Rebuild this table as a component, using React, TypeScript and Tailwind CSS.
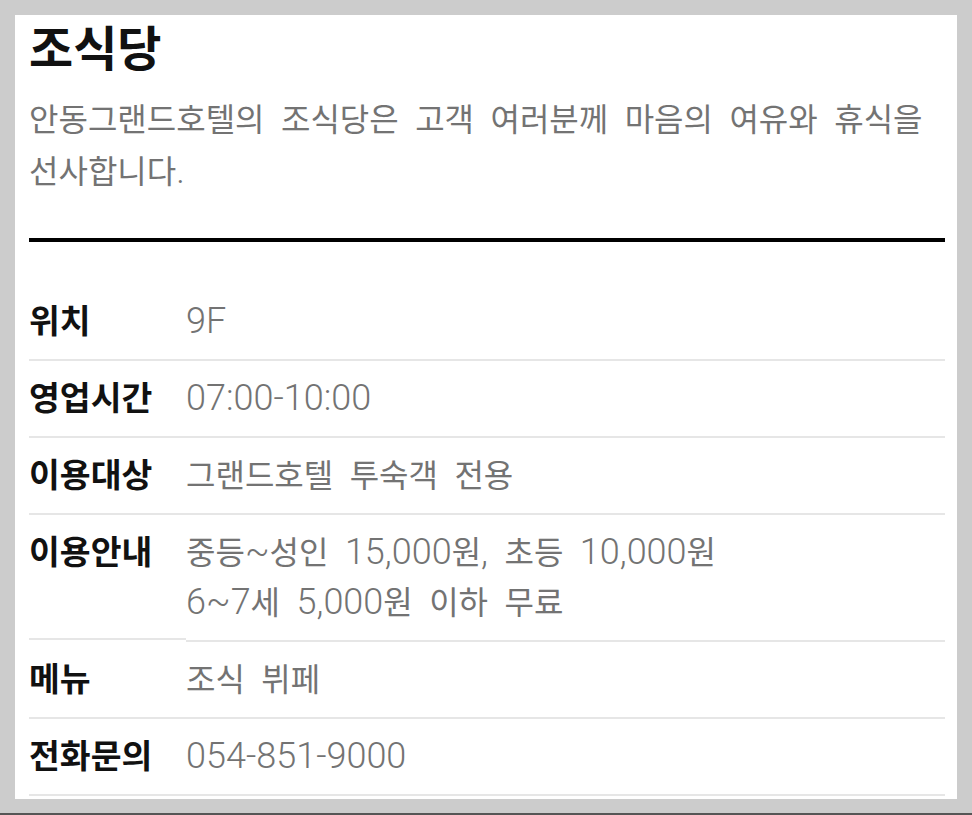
import React from "react";

const FONT = { fontFamily: 'Roboto, "Noto Sans CJK KR", sans-serif' };

function Mixed({ text }: { text: string }) {
  const parts = text.split(/([0-9A-Za-z:,.~\-]+)/);
  return (
    <>
      {parts.map((p, i) =>
        i % 2 === 1 ? (
          <span key={i} className="text-[36px] leading-[0] font-light tracking-normal">
            {p}
          </span>
        ) : (
          <span key={i}>{p}</span>
        )
      )}
    </>
  );
}

type Row = { label: string; lines: string[] };

const rows: Row[] = [
  { label: "위치", lines: ["9F"] },
  { label: "영업시간", lines: ["07:00-10:00"] },
  { label: "이용대상", lines: ["그랜드호텔 투숙객 전용"] },
  { label: "이용안내", lines: ["중등~성인 15,000원, 초등 10,000원", "6~7세 5,000원 이하 무료"] },
  { label: "메뉴", lines: ["조식 뷔페"] },
  { label: "전화문의", lines: ["054-851-9000"] },
];

export default function App() {
  return (
    <div
      className="w-full h-[815px] bg-[#cccccc] pt-[15px] pl-[15px] pr-[15px] pb-[14px] border-b-2 border-[#555555] flex flex-col"
      style={FONT}
    >
      <div className="flex-1 bg-white pl-[14px] pr-[12px] pt-[10px]">
        <h1 className="text-[48px] leading-[50px] font-bold text-[#111111]">조식당</h1>
        <p className="mt-[19px] text-[32px] leading-[52px] text-[#737373] break-keep [word-spacing:8.5px]">
          <Mixed text="안동그랜드호텔의 조식당은 고객 여러분께 마음의 여유와 휴식을 선사합니다." />
        </p>
        <div className="mt-[40px] h-[4px] bg-black" />
        <div className="mt-[42px]">
          {rows.map((r) => (
            <div key={r.label} className="flex items-stretch">
              <div
                className={`w-[157px] shrink-0 border-b-2 border-[#e6e6e6] pt-[13px] pb-[12px] text-[33.5px] leading-[50px] font-bold text-[#111111] ${
                  r.lines.length > 1 ? "mb-[2px]" : ""
                }`}
              >
                {r.label}
              </div>
              <div className="flex-1 border-b-2 border-[#e6e6e6] pt-[13px] pb-[12px] text-[32px] leading-[50px] text-[#737373] break-keep [word-spacing:8.5px]">
                {r.lines.map((l) => (
                  <div key={l}>
                    <Mixed text={l} />
                  </div>
                ))}
              </div>
            </div>
          ))}
        </div>
      </div>
    </div>
  );
}
